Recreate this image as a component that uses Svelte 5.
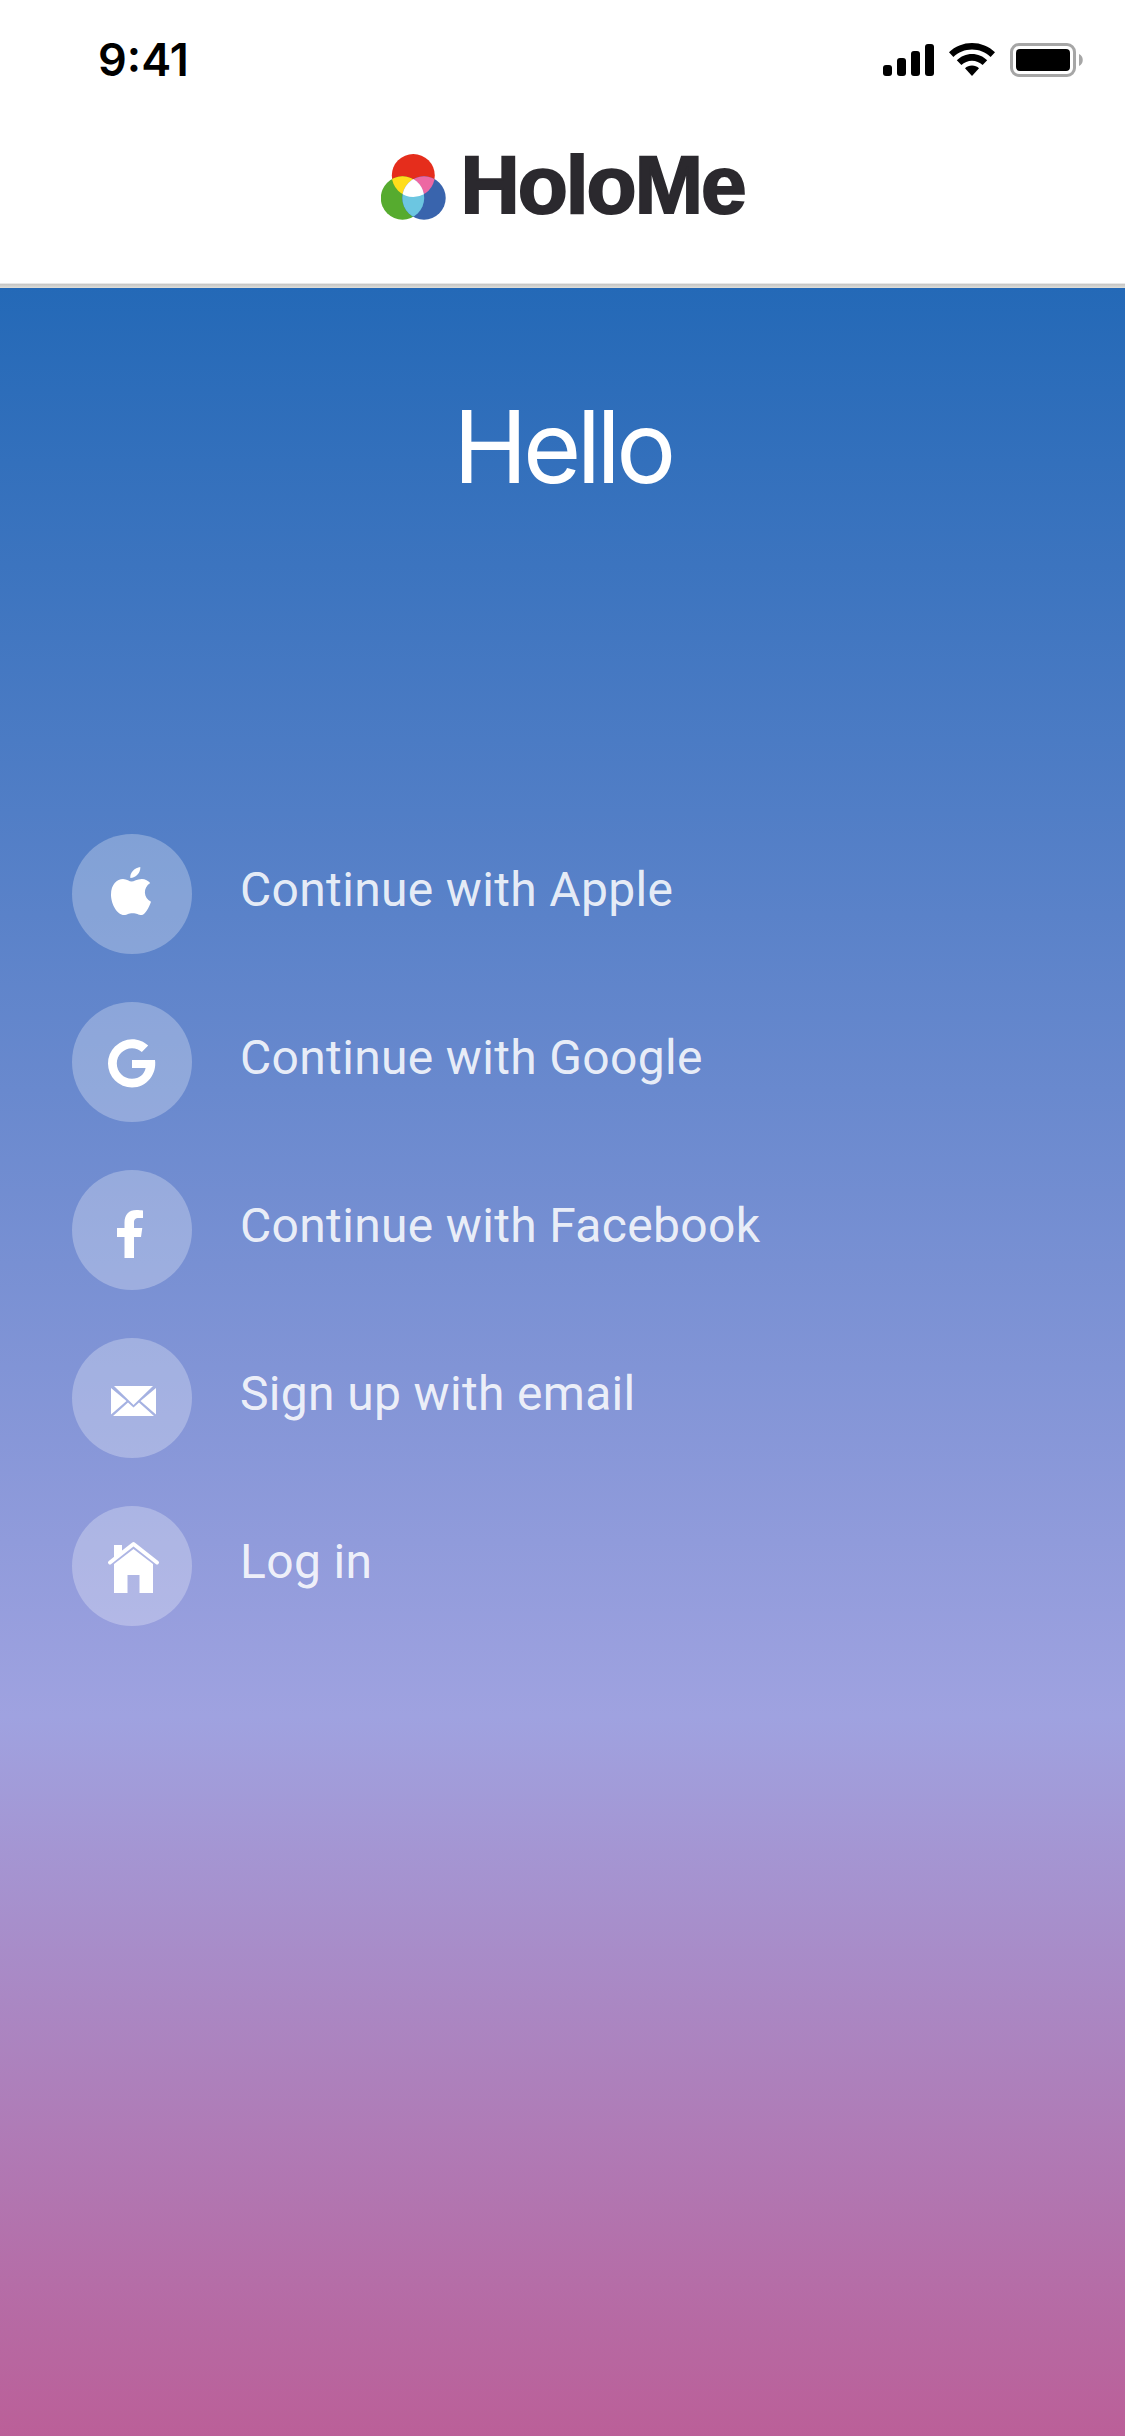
<script>
  const items = [
    { id: 'apple', label: 'Continue with Apple' },
    { id: 'google', label: 'Continue with Google' },
    { id: 'facebook', label: 'Continue with Facebook' },
    { id: 'email', label: 'Sign up with email' },
    { id: 'login', label: 'Log in' }
  ];
</script>

<div class="screen">
  <header>
    <div class="status">
      <span class="time">9:41</span>
      <svg class="indicators" viewBox="0 0 202 36" width="202" height="36">
        <rect x="0" y="22" width="9" height="11" rx="3" />
        <rect x="14" y="15" width="9" height="18" rx="3" />
        <rect x="28" y="8" width="9" height="25" rx="3" />
        <rect x="42" y="1" width="9" height="32" rx="3" />
        <g transform="translate(66 0)">
          <path d="M23 0c8.700 0 17 3.400 23 9.300l-4.400 4.700C36.600 9.300 30 6.600 23 6.600S9.400 9.300 4.400 14L0 9.300C6 3.400 14.300 0 23 0z" />
          <path d="M23 11c5.800 0 11.300 2.300 15.200 6.300l-4.600 4.700C30.800 19.300 27 17.700 23 17.700S15.200 19.300 12.400 22l-4.600-4.700C11.700 13.300 17.200 11 23 11z" />
          <path d="M23 22.500c2.700 0 5.200 1 7 2.800L23 33l-7-7.700c1.800-1.800 4.300-2.800 7-2.800z" />
        </g>
        <rect x="128.500" y="1.500" width="63" height="31" rx="7.500" fill="none" stroke="#a6a6a6" stroke-width="3" />
        <rect x="133" y="6" width="54" height="22" rx="4" />
        <path d="M196 11c5 1.800 5 10.200 0 12z" fill="#a6a6a6" />
      </svg>
    </div>
    <div class="brand">
      <svg class="logo" viewBox="0 0 65 66" width="65" height="66">
        <defs>
          <clipPath id="red"><circle cx="32.300" cy="21.500" r="21.500" /></clipPath>
          <clipPath id="green"><circle cx="21.500" cy="44" r="21.700" /></clipPath>
          <clipPath id="both" clip-path="url(#red)"><circle cx="21.500" cy="44" r="21.700" /></clipPath>
        </defs>
        <circle cx="32.300" cy="21.500" r="21.500" fill="#e52d1c" />
        <circle cx="21.500" cy="44" r="21.700" fill="#56ab2f" />
        <circle cx="43" cy="44" r="21.700" fill="#3964ad" />
        <circle cx="21.500" cy="44" r="21.700" fill="#ffdd1b" clip-path="url(#red)" />
        <circle cx="43" cy="44" r="21.700" fill="#ed68a3" clip-path="url(#red)" />
        <circle cx="43" cy="44" r="21.700" fill="#6cc6e1" clip-path="url(#green)" />
        <circle cx="43" cy="44" r="21.700" fill="#fff" clip-path="url(#both)" />
      </svg>
      <span class="name">HoloMe</span>
    </div>
  </header>
  <main>
    <h1>Hello</h1>
    <ul>
      {#each items as item (item.id)}
        <li>
          <span class="badge">
            <svg viewBox="0 0 120 120" width="120" height="120" fill="#fff">
              {#if item.id === 'apple'}
                <path d="M68.300 33c.5 5.500-4.500 11-10 11-.6-5.500 4.500-10.500 10-11z" />
                <path d="M59.500 47.500c2.300 0 5.500-2.600 10.300-2.600 3.400 0 6.600 1.600 8.400 4.200-7.600 4.600-6.700 15.300.8 18.700-2 6-6 13.200-9.400 13.200-3.500 0-4.700-1.700-9-1.700s-5.200 1.700-8.600 1.700C45.500 81 39 70.500 39 60.500c0-10.300 6-15.600 12-15.600 3.800 0 6.500 2.600 8.500 2.600z" />
              {:else if item.id === 'google'}
                <path d="M60 58h23c2 14-8 27.500-23 27.500A24 24 0 0 1 36 61.500 24 24 0 0 1 60 37.300c6.300 0 12 2.400 16.200 6.300l-6.400 6.500c-2.600-2.500-6-3.900-9.800-3.900-8.500 0-15.200 6.900-15.200 15.300S51.500 76.800 60 76.800c7.300 0 12.500-4.300 13.600-10.700H60z" />
              {:else if item.id === 'facebook'}
                <path d="M52.500 88V67H45v-9h7.500v-5.500C52.500 44.500 57 40 64.500 40c2.300 0 4.900.2 6.500.5v7.500h-4c-4 0-5 2-5 4.500V58h8.300l-1.300 9h-7v21z" />
              {:else if item.id === 'email'}
                <path d="M42 48H81L61.500 67zM39 50L54.500 63 39 76.500zM84 50V76.500L68.500 63zM41 78L56 64.500 61.500 69.500 67 64.500 82 78z" />
              {:else}
                <path d="M38 56.500L61.500 38 85 56.500" fill="none" stroke="#fff" stroke-width="4" stroke-linecap="round" stroke-linejoin="round" />
                <path d="M42 39h8v6.500L42 52zM42 58L61.500 43 81 58V87H67.500V69H55.500V87H42z" />
              {/if}
            </svg>
          </span>
          <span class="label">{item.label}</span>
        </li>
      {/each}
    </ul>
  </main>
</div>

<style>
  .screen {
    width: 1125px;
    height: 2436px;
    display: flex;
    flex-direction: column;
    background: #fff;
    overflow: hidden;
  }
  :global(body) { margin: 0; }
  header {
    box-sizing: border-box;
    height: 288px;
    background: linear-gradient(#fff 283px, #e8e8e8 283px, #e8e8e8 284px, #c4c4c4 284px, #dededa 288px);
    flex: none;
  }
  .status {
    display: flex;
    justify-content: space-between;
    align-items: flex-start;
    padding: 35px 40px 0 98px;
    height: 83px;
  }
  .time {
    font: 600 45px/48px Inter, sans-serif;
    padding-top: 1px;
    color: #000;
  }
  .indicators { margin-top: 8px; }
  .brand {
    display: flex;
    align-items: flex-start;
    justify-content: center;
    gap: 14px;
    padding: 36px 0 0 1px;
  }
  .name {
    margin-top: -2px;
    font: 700 82px/66px "Liberation Sans", sans-serif;
    color: #2b292e;
    letter-spacing: -2px;
    -webkit-text-stroke: 2px #2b292e;
  }
  main {
    flex: 1;
    display: flex;
    flex-direction: column;
    background: linear-gradient(#2469b7, #9fa2e0 66.500%, #bb5f98);
  }
  h1 {
    margin: 0;
    padding-top: 99px;
    height: 447px;
    text-align: center;
    font: 400 100px/120px Inter, sans-serif;
    letter-spacing: -4.500px;
    color: #fff;
  }
  ul {
    list-style: none;
    margin: 0;
    padding: 0 72px;
    display: flex;
    flex-direction: column;
    gap: 48px;
  }
  li { display: flex; gap: 48px; height: 120px; }
  .badge {
    width: 120px;
    height: 120px;
    border-radius: 50%;
    background: rgba(255, 255, 255, 0.27);
  }
  .badge svg { display: block; }
  .label {
    font: 400 48px/56px Roboto, sans-serif;
    letter-spacing: 0.330px;
    padding-top: 28px;
    color: rgba(255, 255, 255, 0.87);
    white-space: nowrap;
  }
</style>
